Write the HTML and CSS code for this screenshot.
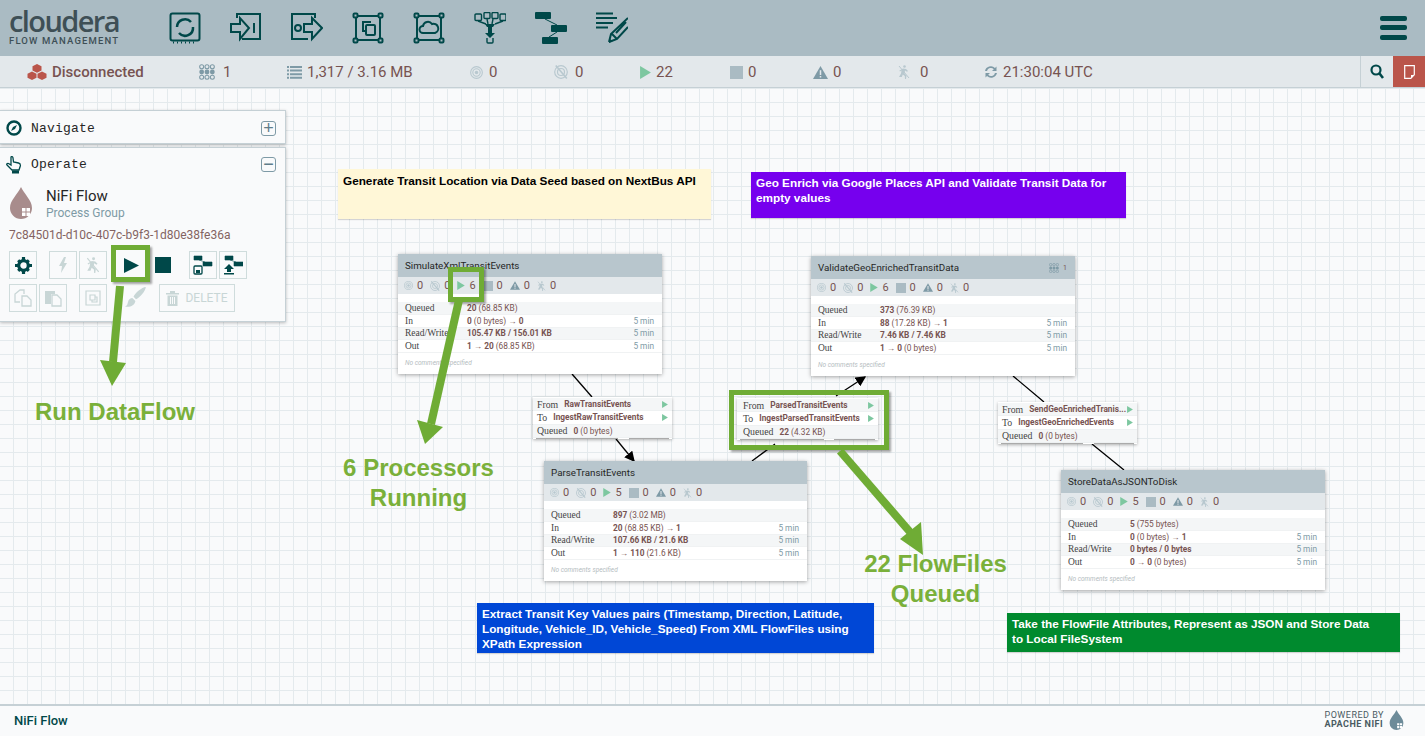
FILE: index.html
```html
<!DOCTYPE html>
<html lang="en">
<head>
    <meta charset="UTF-8">
    <meta name="viewport" content="width=device-width, initial-scale=1.0">
    <title>NiFi Flow</title>
    <link rel="stylesheet" href="styles.css">
</head>
<body>
    <svg class="defs" width="0" height="0">
        <symbol id="i-play" viewBox="0 0 10 12"><path d="M0 0L10 6L0 12z"/></symbol>
        <symbol id="i-target" viewBox="0 0 12 12"><circle cx="6" cy="6" r="5.4" fill="none" stroke="currentColor"/><circle cx="6" cy="6" r="3.4" fill="none" stroke="currentColor"/><circle cx="6" cy="6" r="1.6" fill="currentColor"/></symbol>
        <symbol id="i-off" viewBox="0 0 12 12"><circle cx="6" cy="6" r="5.4" fill="none" stroke="currentColor"/><circle cx="6" cy="6" r="3" fill="none" stroke="currentColor"/><path d="M1.5 0.5L11 11.5" stroke="currentColor" stroke-width="1.4"/></symbol>
        <symbol id="i-warn" viewBox="0 0 14 12"><path d="M7 0L14 12H0z"/><path d="M6.3 4h1.4v4.4H6.3zM6.3 9.2h1.4v1.4H6.3z" fill="#e3e8eb"/></symbol>
        <symbol id="i-bolt" viewBox="0 0 12 14"><circle cx="6.500" cy="1.500" r="1.300"/><path d="M5 3.500l3 .5 2 2-1 .8-2-1.300-.5 3 2 2-.5 3.500H7l-.2-3-2-1.500-1 2.500H1l2-3.500.5-3-1.500 1-.8-.8z"/><path d="M1 1L11 13" stroke="currentColor" stroke-width="1"/></symbol>
        <symbol id="i-grid" viewBox="0 0 12 12"><g fill="none" stroke="currentColor" stroke-width=".8"><circle cx="2" cy="2" r="1.500"/><circle cx="6" cy="2" r="1.500"/><circle cx="10" cy="2" r="1.500"/><circle cx="2" cy="10" r="1.500"/><circle cx="6" cy="10" r="1.500"/><circle cx="10" cy="10" r="1.500"/></g><circle cx="2" cy="6" r="1.800"/><circle cx="6" cy="6" r="1.800"/><circle cx="10" cy="6" r="1.800"/></symbol>
        <symbol id="i-drop" viewBox="0 0 24 32"><path d="M12 0C9 7 1 13 1 21a11 11 0 0 0 22 0C23 13 15 7 12 0z"/><path d="M13 21h3.500v3.500H13zM17.500 21H21v3.500h-3.500zM13 25.500h3.500V29H13zM17.500 25.500H21V29h-3.500z" fill="#fff"/></symbol>
    </svg>

    <div class="navbar">
        <div class="brand">
            <div class="brand-name">cloudera</div>
            <div class="brand-sub">FLOW MANAGEMENT</div>
        </div>
        <div class="toolbox">
            <svg class="tool" viewBox="0 0 32 32"><rect x="1.500" y="1.500" width="29" height="27" rx="2"/><path d="M8 15a8 8 0 0 1 14-5M24 15a8 8 0 0 1-14 6" stroke-width="2.500"/><path d="M4 30.500h1M8 30.500h1M12 30.500h1M16 30.500h1M20 30.500h1M24 30.500h1"/></svg>
            <svg class="tool" viewBox="0 0 32 32"><path d="M7 6V2h23v25H12"/><path d="M1 12h9V6l9 10-9 11v-7H1z"/><path d="M24 11v10"/></svg>
            <svg class="tool" viewBox="0 0 32 32"><path d="M24 6V2H1v25h16"/><circle cx="7" cy="16" r="3"/><path d="M13 12h8V6l10 10-10 11v-7h-8z"/></svg>
            <svg class="tool" viewBox="0 0 32 32"><rect x="4" y="4" width="24" height="24"/><rect x="1.500" y="1.500" width="4" height="4" rx="1" class="nob"/><rect x="26.500" y="1.500" width="4" height="4" rx="1" class="nob"/><rect x="1.500" y="26.500" width="4" height="4" rx="1" class="nob"/><rect x="26.500" y="26.500" width="4" height="4" rx="1" class="nob"/><path d="M18 11v-1h-7v9h3"/><rect x="14" y="13" width="9" height="10" rx="1"/></svg>
            <svg class="tool" viewBox="0 0 32 32"><rect x="4" y="4" width="24" height="24"/><rect x="1.500" y="1.500" width="4" height="4" rx="1" class="nob"/><rect x="26.500" y="1.500" width="4" height="4" rx="1" class="nob"/><rect x="1.500" y="26.500" width="4" height="4" rx="1" class="nob"/><rect x="26.500" y="26.500" width="4" height="4" rx="1" class="nob"/><path d="M10 21a3.500 3.500 0 0 1 0-7 5 5 0 0 1 9-2 4.500 4.500 0 0 1 3 9z"/></svg>
            <svg class="tool thin-tool" viewBox="0 0 32 32"><rect x="1" y="2" width="6.500" height="6.500" rx="1"/><rect x="10" y=".5" width="6" height="6" rx="1"/><rect x="18" y=".5" width="6" height="6" rx="1"/><rect x="26" y="2" width="6" height="6.500" rx="1"/><path d="M4 9l8 3M13 7l1 5M19 7l-1 5M29 9l-8 3"/><path d="M11 12h10l-2 3h-6zM14 15h4v6h3l-5 5-5-5h3z" class="fill"/><path d="M13 26v4a1 1 0 0 0 1 1h4a1 1 0 0 0 1-1v-4"/></svg>
            <svg class="tool fill-all" viewBox="0 0 32 32"><rect x="0" y="0" width="16" height="7" rx="1"/><rect x="16" y="13" width="16" height="7" rx="1"/><rect x="7" y="25" width="16" height="7" rx="1"/><path d="M10 7l12 6M22 20l-8 5" class="thin"/></svg>
            <svg class="tool" viewBox="0 0 32 32"><path d="M0 1.500h17M0 6h21M0 11h17M0 15.500h12" stroke-width="2.200"/><path d="M13 30l2-8L32 6M13 30l8-3L32 15M16 22l5 5M20 21l10-11"/><path d="M13 31l.8-4 3 2z" class="fill"/></svg>
        </div>
        <div class="burger"><span></span><span></span><span></span></div>
    </div>

    <div class="statusbar">
        <div class="stats">
            <span class="stat stat-conn">
                <svg class="cube" width="20" height="16" viewBox="0 0 20 16"><path d="M10 0l4.500 2.200v4.400L10 8.800 5.500 6.600V2.200zM5 7.500l4.500 2.200v4.100L5 16 .5 13.800V9.700zM15 7.500l4.500 2.200v4.100L15 16l-4.500-2.200V9.700z"/></svg>
                Disconnected
            </span>
            <span class="stat stat-threads"><svg class="ic" width="16" height="16"><use href="#i-grid"/></svg>1</span>
            <span class="stat stat-queue">
                <svg class="ic" width="15" height="13" viewBox="0 0 15 13"><path d="M0 0h2v2H0zM3 0h12v2H3zM0 3.600h2v2H0zM3 3.600h12v2H3zM0 7.200h2v2H0zM3 7.200h12v2H3zM0 10.800h2v2H0zM3 10.800h12v2H3z"/></svg>1,317 / 3.16 MB
            </span>
            <span class="stat stat-a"><svg class="ic light" width="13" height="13"><use href="#i-target"/></svg>0</span>
            <span class="stat stat-b"><svg class="ic light" width="14" height="14"><use href="#i-off"/></svg>0</span>
            <span class="stat stat-c"><svg class="ic run" width="11" height="13"><use href="#i-play"/></svg>22</span>
            <span class="stat stat-d"><span class="square"></span>0</span>
            <span class="stat stat-e"><svg class="ic" width="15" height="13"><use href="#i-warn"/></svg>0</span>
            <span class="stat stat-f"><svg class="ic light" width="12" height="14"><use href="#i-bolt"/></svg>0</span>
            <span class="stat stat-g">
                <svg class="ic" width="14" height="14" viewBox="0 0 14 14"><path d="M1 6a6 6 0 0 1 10-3l1.500-1.500V6H8l1.800-1.800A4 4 0 0 0 3 6zM13 8a6 6 0 0 1-10 3l-1.500 1.500V8H6L4.200 9.800A4 4 0 0 0 11 8z"/></svg>21:30:04 UTC
            </span>
        </div>
        <div class="search-btn">
            <svg width="14" height="15" viewBox="0 0 14 15"><circle cx="6" cy="6" r="4.500" fill="none" stroke="#004849" stroke-width="2.200"/><path d="M9.500 9.500L13 14" stroke="#004849" stroke-width="2.600"/></svg>
        </div>
        <div class="bulletin-btn">
            <svg width="11" height="14" viewBox="0 0 11 14"><path d="M.7.700h9.600v9l-3.500 3.600H.7z" fill="none" stroke="#fff" stroke-width="1.200"/><path d="M7 13v-3h3z" fill="#fff"/></svg>
        </div>
    </div>

    <div class="canvas">
        <div class="palette palette-nav">
            <svg width="16" height="16" viewBox="0 0 16 16"><circle cx="8" cy="8" r="6.500" fill="none" stroke="#004849" stroke-width="2.400"/><path d="M11 5L9 9 5 11l2-4z" fill="#004849"/></svg>
            <span class="palette-title">Navigate</span>
            <span class="toggle">+</span>
        </div>
        <div class="palette palette-op">
            <div class="op-head">
                <svg width="16" height="18" viewBox="0 0 16 18"><path d="M5 1c1-1 2 0 2 1l.5 4 5 1c2 .5 2 2 1.800 3L13 14H6L1 9c-1-1 .500-2 1.500-1.500L5 9z" fill="none" stroke="#004849" stroke-width="1.300"/><rect x="6" y="14.500" width="7" height="3" fill="#004849"/></svg>
                <span class="palette-title">Operate</span>
                <span class="toggle">&#8722;</span>
            </div>
            <div class="op-info">
                <svg class="op-drop" width="24" height="32"><use href="#i-drop"/></svg>
                <div>
                    <div class="op-name">NiFi Flow</div>
                    <div class="op-type">Process Group</div>
                </div>
            </div>
            <div class="op-id">7c84501d-d10c-407c-b9f3-1d80e38fe36a</div>
            <div class="op-row">
                <span class="op-btn on mr-gear"><svg width="17" height="17" viewBox="0 0 16 16"><circle cx="8" cy="8" r="4.500" fill="none" stroke="#004849" stroke-width="3"/><path d="M6.500 0h3v3h-3zM6.500 13h3v3h-3zM0 6.500h3v3H0zM13 6.500h3v3h-3zM2 4l2-2 2 2-2 2zM10 4l2-2 2 2-2 2zM2 12l2-2 2 2-2 2zM10 12l2-2 2 2-2 2z" fill="#004849"/></svg></span>
                <span class="op-btn off"><svg width="12" height="16" viewBox="0 0 12 16"><path d="M7 0L2 9h3l-1 7 6-10H7l2-6z" fill="#c8d6d6"/></svg></span>
                <span class="op-btn off mr-bolt"><svg width="14" height="16"><use href="#i-bolt"/></svg></span>
                <span class="op-btn on bare mr-play"><svg width="15" height="15" viewBox="0 0 10 12" preserveAspectRatio="none"><path d="M0 0L10 6L0 12z" fill="#004849"/></svg></span>
                <span class="op-btn on bare mr-stop"><span class="stop"></span></span>
                <span class="op-btn on"><svg width="20" height="20" viewBox="0 0 20 20"><path d="M1 1h8v4H1zM10 7h9v4h-9zM6 5l6 2" fill="#004849" stroke="#004849" stroke-width=".6"/><rect x="1" y="11" width="8" height="8" rx="1" fill="none" stroke="#004849" stroke-width="1.300"/><rect x="3" y="15" width="4" height="3" fill="#004849"/></svg></span>
                <span class="op-btn on"><svg width="20" height="20" viewBox="0 0 20 20"><path d="M2 1h8v4H2zM11 7h9v4h-9zM7 5l6 2" fill="#004849" stroke="#004849" stroke-width=".6"/><path d="M6 9l5 5H8v3H4v-3H1zM1 18h10v1.500H1z" fill="#004849"/></svg></span>
            </div>
            <div class="op-row">
                <span class="op-btn off"><svg width="18" height="18" viewBox="0 0 18 18"><path d="M6 13H1V5l5-4h4v4M8 17V7h5l4 4v6z" fill="none" stroke="#c8d6d6" stroke-width="1.300"/></svg></span>
                <span class="op-btn off mr-paste"><svg width="18" height="18" viewBox="0 0 18 18"><path d="M1 2h10v3H7v10H1z" fill="#c8d6d6"/><path d="M8 6h5l4 4v7H8z" fill="none" stroke="#c8d6d6" stroke-width="1.300"/></svg></span>
                <span class="op-btn off mr-group"><svg width="18" height="18" viewBox="0 0 18 18"><path d="M2 2h14v14H2zM6 6h5v5H6zM8 11v2h5V8h-2" fill="none" stroke="#c8d6d6" stroke-width="1.200"/></svg></span>
                <span class="op-btn brush mr-brush"><svg width="22" height="22" viewBox="0 0 18 18"><path d="M17 0c0 3-5 9-8 10L7 8c1-3 7-8 10-8zM6 9l2.500 2.500C8 15 4 17 0 16c2-1 2-2 2.500-4S4.500 9 6 9z" fill="#c8d6d6"/></svg></span>
                <span class="op-btn off delete"><svg width="13" height="15" viewBox="0 0 13 15"><path d="M0 2h13v1.500H0zM4 0h5v2H4zM1.500 4.500h10V15h-10zM4 6v7h1V6zM6 6v7h1V6zM8 6v7h1V6z" fill="#c8d6d6" fill-rule="evenodd"/></svg>DELETE</span>
            </div>
        </div>

        <!-- sticky labels -->
        <div class="label label-yellow">Generate Transit Location via Data Seed based on NextBus API</div>
        <div class="label label-purple">Geo Enrich via Google Places API and Validate Transit Data for empty values</div>
        <div class="label label-blue">Extract Transit Key Values pairs (Timestamp, Direction, Latitude, Longitude, Vehicle_ID, Vehicle_Speed) From XML FlowFiles using XPath Expression</div>
        <div class="label label-green">Take the FlowFile Attributes, Represent as JSON and Store Data to Local FileSystem</div>

        <svg class="lines" width="1425" height="736" viewBox="0 0 1425 736">
            <defs>
                <marker id="tip" markerWidth="8" markerHeight="8" refX="7" refY="4" orient="auto"><path d="M0 0L8 4L0 8z"/></marker>
            </defs>
            <path d="M572 374L592 397"/>
            <path d="M616 439L634 461" marker-end="url(#tip)"/>
            <path d="M752 461L775 444M836 396L865 377" marker-end="url(#tip)"/>
            <path d="M1013 376L1044 402M1092 444L1124 470"/>
        </svg>

        <div class="proc proc-1">
            <div class="proc-title">SimulateXmlTransitEvents</div>
            <div class="proc-stats">
                <svg class="ic light" width="9" height="9"><use href="#i-target"/></svg><b>0</b>
                <svg class="ic light" width="10" height="10"><use href="#i-off"/></svg><b>0</b>
                <svg class="ic run" width="8" height="9"><use href="#i-play"/></svg><b>6</b>
                <span class="square small"></span><b>0</b>
                <svg class="ic" width="10" height="9"><use href="#i-warn"/></svg><b>0</b>
                <svg class="ic light" width="9" height="10"><use href="#i-bolt"/></svg><b>0</b>
            </div>
            <div class="proc-row shade"><span class="k">Queued</span><span class="v"><b>20</b> (68.85 KB)</span></div>
            <div class="proc-row"><span class="k">In</span><span class="v"><b>0</b> (0 bytes) &#8594; <b>0</b></span><span class="t">5 min</span></div>
            <div class="proc-row shade"><span class="k">Read/Write</span><span class="v"><b>105.47 KB / 156.01 KB</b></span><span class="t">5 min</span></div>
            <div class="proc-row"><span class="k">Out</span><span class="v"><b>1 &#8594; 20</b> (68.85 KB)</span><span class="t">5 min</span></div>
            <div class="proc-comment">No comments specified</div>
        </div>

        <div class="proc proc-2">
            <div class="proc-title">ParseTransitEvents</div>
            <div class="proc-stats">
                <svg class="ic light" width="9" height="9"><use href="#i-target"/></svg><b>0</b>
                <svg class="ic light" width="10" height="10"><use href="#i-off"/></svg><b>0</b>
                <svg class="ic run" width="8" height="9"><use href="#i-play"/></svg><b>5</b>
                <span class="square small"></span><b>0</b>
                <svg class="ic" width="10" height="9"><use href="#i-warn"/></svg><b>0</b>
                <svg class="ic light" width="9" height="10"><use href="#i-bolt"/></svg><b>0</b>
            </div>
            <div class="proc-row shade"><span class="k">Queued</span><span class="v"><b>897</b> (3.02 MB)</span></div>
            <div class="proc-row"><span class="k">In</span><span class="v"><b>20</b> (68.85 KB) &#8594; <b>1</b></span><span class="t">5 min</span></div>
            <div class="proc-row shade"><span class="k">Read/Write</span><span class="v"><b>107.66 KB / 21.6 KB</b></span><span class="t">5 min</span></div>
            <div class="proc-row"><span class="k">Out</span><span class="v"><b>1 &#8594; 110</b> (21.6 KB)</span><span class="t">5 min</span></div>
            <div class="proc-comment">No comments specified</div>
        </div>

        <div class="proc proc-3">
            <div class="proc-title">ValidateGeoEnrichedTransitData<span class="tasks"><svg class="ic" width="10" height="10"><use href="#i-grid"/></svg>1</span></div>
            <div class="proc-stats">
                <svg class="ic light" width="9" height="9"><use href="#i-target"/></svg><b>0</b>
                <svg class="ic light" width="10" height="10"><use href="#i-off"/></svg><b>0</b>
                <svg class="ic run" width="8" height="9"><use href="#i-play"/></svg><b>6</b>
                <span class="square small"></span><b>0</b>
                <svg class="ic" width="10" height="9"><use href="#i-warn"/></svg><b>0</b>
                <svg class="ic light" width="9" height="10"><use href="#i-bolt"/></svg><b>0</b>
            </div>
            <div class="proc-row shade"><span class="k">Queued</span><span class="v"><b>373</b> (76.39 KB)</span></div>
            <div class="proc-row"><span class="k">In</span><span class="v"><b>88</b> (17.28 KB) &#8594; <b>1</b></span><span class="t">5 min</span></div>
            <div class="proc-row shade"><span class="k">Read/Write</span><span class="v"><b>7.46 KB / 7.46 KB</b></span><span class="t">5 min</span></div>
            <div class="proc-row"><span class="k">Out</span><span class="v"><b>1 &#8594; 0</b> (0 bytes)</span><span class="t">5 min</span></div>
            <div class="proc-comment">No comments specified</div>
        </div>

        <div class="proc proc-4">
            <div class="proc-title">StoreDataAsJSONToDisk</div>
            <div class="proc-stats">
                <svg class="ic light" width="9" height="9"><use href="#i-target"/></svg><b>0</b>
                <svg class="ic light" width="10" height="10"><use href="#i-off"/></svg><b>0</b>
                <svg class="ic run" width="8" height="9"><use href="#i-play"/></svg><b>5</b>
                <span class="square small"></span><b>0</b>
                <svg class="ic" width="10" height="9"><use href="#i-warn"/></svg><b>0</b>
                <svg class="ic light" width="9" height="10"><use href="#i-bolt"/></svg><b>0</b>
            </div>
            <div class="proc-row shade"><span class="k">Queued</span><span class="v"><b>5</b> (755 bytes)</span></div>
            <div class="proc-row"><span class="k">In</span><span class="v"><b>0</b> (0 bytes) &#8594; <b>1</b></span><span class="t">5 min</span></div>
            <div class="proc-row shade"><span class="k">Read/Write</span><span class="v"><b>0 bytes / 0 bytes</b></span><span class="t">5 min</span></div>
            <div class="proc-row"><span class="k">Out</span><span class="v"><b>0 &#8594; 0</b> (0 bytes)</span><span class="t">5 min</span></div>
            <div class="proc-comment">No comments specified</div>
        </div>

        <div class="conn conn-1">
            <div class="conn-row shade"><span class="ck">From</span><b>RawTransitEvents</b><svg class="ic run" width="6" height="7"><use href="#i-play"/></svg></div>
            <div class="conn-row"><span class="ck">To</span><b>IngestRawTransitEvents</b><svg class="ic run" width="6" height="7"><use href="#i-play"/></svg></div>
            <div class="conn-row shade"><span class="ck">Queued</span><span class="cv"><b>0</b> (0 bytes)</span></div>
            <div class="conn-bar"></div>
        </div>
        <div class="conn conn-2">
            <div class="conn-row shade"><span class="ck">From</span><b>ParsedTransitEvents</b><svg class="ic run" width="6" height="7"><use href="#i-play"/></svg></div>
            <div class="conn-row"><span class="ck">To</span><b>IngestParsedTransitEvents</b><svg class="ic run" width="6" height="7"><use href="#i-play"/></svg></div>
            <div class="conn-row shade"><span class="ck">Queued</span><span class="cv"><b>22</b> (4.32 KB)</span></div>
            <div class="conn-bar"></div>
        </div>
        <div class="conn conn-3">
            <div class="conn-row shade"><span class="ck">From</span><b>SendGeoEnrichedTranis...</b><svg class="ic run" width="6" height="7"><use href="#i-play"/></svg></div>
            <div class="conn-row"><span class="ck">To</span><b>IngestGeoEnrichedEvents</b><svg class="ic run" width="6" height="7"><use href="#i-play"/></svg></div>
            <div class="conn-row shade"><span class="ck">Queued</span><span class="cv"><b>0</b> (0 bytes)</span></div>
            <div class="conn-bar"></div>
        </div>

        <!-- green callouts drawn on top of the flow -->
        <div class="box box-play"></div>
        <div class="box box-six"></div>
        <div class="box box-conn"></div>
        <svg class="arrows" width="1425" height="736" viewBox="0 0 1425 736">
            <path d="M120 286L113 362"/>
            <path d="M100 360L126 363L112 386z" class="head"/>
            <path d="M459 300L431 424"/>
            <path d="M417 420L443 427L425 444z" class="head"/>
            <path d="M840 451L910 532"/>
            <path d="M900 539L921 522L923 555z" class="head"/>
        </svg>
        <div class="note note-run">Run DataFlow</div>
        <div class="note note-six">6 Processors<br>Running</div>
        <div class="note note-flow">22 FlowFiles<br>Queued</div>
    </div>

    <div class="footer">
        <span class="crumb">NiFi Flow</span>
        <div class="powered">
            <div>POWERED BY<br><b>APACHE NIFI</b></div>
            <svg width="15" height="20"><use href="#i-drop"/></svg>
        </div>
    </div>
</body>
</html>
```

FILE: styles.css
```css
html, body {
    margin: 0;
    height: 100%;
}

body {
    width: 1425px;
    height: 736px;
    overflow: hidden;
    font-family: Roboto, "Liberation Sans", sans-serif;
    display: flex;
    flex-direction: column;
    background: #f9fafb;
    color: #775351;
}

.defs {
    position: absolute;
}

.navbar {
    height: 56px;
    flex: none;
    background: #aabbc3;
    display: flex;
    align-items: center;
    box-sizing: border-box;
    padding-left: 9px;
    color: #004849;
}

.brand {
    width: 160px;
    margin-top: -2px;
    color: #3e4f56;
}

.brand-name {
    font-family: "Open Sans", sans-serif;
    font-size: 29px;
    font-weight: 600;
    letter-spacing: -1.6px;
    line-height: 25px;
}

.brand-sub {
    font-size: 9.5px;
    letter-spacing: 1.15px;
    line-height: 10px;
    margin-top: 3px;
    font-weight: 500;
}

.toolbox {
    display: flex;
    gap: 29px;
}

.tool {
    width: 32px;
    height: 32px;
    fill: none;
    stroke: #004849;
    stroke-width: 2;
}

.tool .fill {
    fill: #004849;
    stroke: none;
}

.tool .nob {
    fill: #aabbc3;
}

.thin-tool {
    stroke-width: 1.4;
}

.fill-all {
    fill: #004849;
    stroke: none;
}

.fill-all .thin {
    stroke: #004849;
    stroke-width: 1;
}

.burger {
    margin-left: auto;
    margin-right: 18px;
    margin-top: -1px;
    width: 27px;
    display: flex;
    flex-direction: column;
    gap: 4.5px;
}

.burger span {
    height: 5px;
    border-radius: 2px;
    background: #004849;
}

.statusbar {
    height: 32px;
    flex: none;
    background: #e3e8eb;
    border-bottom: 1px solid #c5d0d5;
    box-sizing: border-box;
    display: flex;
    align-items: stretch;
}

.stats {
    flex: 1;
    display: flex;
    align-items: center;
    padding-top: 1px;
    font-size: 15px;
    color: #775351;
}

.stat {
    display: flex;
    align-items: center;
    white-space: nowrap;
}

.stat-conn { margin-left: 27px; width: 172px; font-weight: 500; gap: 5px; }
.stat-threads { width: 88px; gap: 8px; }
.stat-queue { width: 183px; gap: 5px; }
.stat-a { width: 84px; gap: 6px; }
.stat-b { width: 86px; gap: 7px; }
.stat-c { width: 90px; gap: 5px; }
.stat-d { width: 83px; gap: 5px; }
.stat-e { width: 85px; gap: 5px; }
.stat-f { width: 86px; gap: 10px; }
.stat-g { gap: 5px; }

.ic {
    fill: #7e9aa6;
    color: #7e9aa6;
    flex: none;
}

.ic.light {
    fill: #b8c8cf;
    color: #b8c8cf;
}

.ic.run {
    fill: #7dc7a0;
    color: #7dc7a0;
}

.cube {
    fill: #ba554a;
}

.square {
    width: 13px;
    height: 13px;
    background: #aabbc3;
    display: inline-block;
}

.search-btn {
    width: 32px;
    border-left: 1px solid #c5d0d5;
    display: flex;
    align-items: center;
    justify-content: center;
}

.bulletin-btn {
    width: 32px;
    background: #ba554a;
    display: flex;
    align-items: center;
    justify-content: center;
}

.canvas {
    position: relative;
    height: 616px;
    flex: none;
    background-color: #f9fafb;
    background-image:
        linear-gradient(to right, #e4eaed 1px, transparent 1px),
        linear-gradient(to bottom, #e4eaed 1px, transparent 1px);
    background-size: 14px 14px;
    background-position: 13px 0;
}

.palette {
    position: absolute;
    left: 0;
    width: 286px;
    background: #f9fafb;
    border: 1px solid #c5d0d5;
    border-left: none;
    box-shadow: 0 1px 3px rgba(0, 0, 0, 0.25);
    box-sizing: border-box;
    padding: 0 9px 0 6px;
}

.palette-nav {
    top: 22px;
    height: 34px;
    display: flex;
    align-items: center;
    padding-top: 2px;
}

.palette-op {
    top: 59px;
    height: 175px;
}

.op-head {
    height: 33px;
    display: flex;
    align-items: center;
}

.palette-title {
    font-family: "Liberation Mono", monospace;
    font-size: 13px;
    letter-spacing: 0.2px;
    color: #262626;
    margin-left: 9px;
}

.toggle {
    margin-left: auto;
    width: 13px;
    height: 13px;
    border: 1px solid #7e9aa6;
    border-radius: 3px;
    color: #5f7d8a;
    font-size: 18px;
    line-height: 12px;
    text-align: center;
    font-family: "Liberation Sans", sans-serif;
}

.op-info {
    display: flex;
    align-items: flex-start;
    gap: 13px;
    padding-left: 3px;
    margin-top: 6px;
}

.op-drop {
    fill: #a88c8c;
}

.op-name {
    font-size: 15px;
    line-height: 17px;
    color: #262626;
    margin-top: 1px;
}

.op-type {
    font-size: 12px;
    line-height: 16px;
    color: #7e9aa6;
}

.op-id {
    font-size: 12px;
    margin: 7px 0 0 3px;
    line-height: 14px;
    color: #775351;
    opacity: 0.9;
}

.op-row {
    display: flex;
    gap: 2px;
    margin: 9px 0 0 3px;
}

.op-row + .op-row {
    margin-top: 5px;
}

.op-btn {
    width: 28px;
    height: 28px;
    border: 1px solid #cfdcdc;
    box-sizing: border-box;
    display: flex;
    align-items: center;
    justify-content: center;
    flex: none;
    color: #c8d6d6;
    fill: #c8d6d6;
}

.op-btn.bare, .op-btn.brush {
    border-color: transparent;
}

.mr-gear { margin-right: 10px; }
.mr-bolt { margin-right: 8px; }
.mr-play { margin-right: 2px; }
.mr-stop { margin-right: 10px; }
.mr-paste { margin-right: 10px; }
.mr-group { margin-right: 13px; }
.mr-brush { margin-right: 7px; }

.stop {
    width: 16px;
    height: 16px;
    background: #004849;
}

.delete {
    width: 76px;
    gap: 6px;
    font-size: 12px;
}

/* sticky labels */
.label {
    position: absolute;
    box-sizing: border-box;
    font-family: "Liberation Sans", sans-serif;
    font-weight: bold;
    font-size: 11.75px;
    line-height: 15px;
    padding: 3px 5px;
    color: #fff;
    box-shadow: 0 1px 1px rgba(0, 0, 0, 0.15);
}

.label-yellow {
    left: 338px;
    top: 81px;
    width: 373px;
    height: 50px;
    padding-top: 4px;
    background: #fff7d7;
    color: #000;
}

.label-purple {
    left: 751px;
    top: 84px;
    width: 375px;
    height: 46px;
    background: #7600ee;
}

.label-blue {
    left: 477px;
    top: 515px;
    width: 397px;
    height: 50px;
    background: #0047d6;
}

.label-green {
    left: 1007px;
    top: 525px;
    width: 393px;
    height: 39px;
    padding-right: 24px;
    background: #008a2e;
}

.lines {
    position: absolute;
    left: 0;
    top: -88px;
}

.lines path {
    fill: none;
    stroke: #000;
    stroke-width: 1.3;
}

.lines marker path {
    fill: #000;
    stroke: none;
}

/* processors */
.proc {
    position: absolute;
    width: 264px;
    height: 120px;
    background: #fff;
    box-shadow: 0 1px 4px rgba(0, 0, 0, 0.35);
    font-size: 9px;
    color: #262626;
}

.proc-1 { left: 398px; top: 166px; }
.proc-2 { left: 544px; top: 373px; width: 263px; }
.proc-3 { left: 811px; top: 168px; }
.proc-4 { left: 1061px; top: 382px; }

.proc-title {
    height: 23px;
    background: #b8c6cd;
    display: flex;
    align-items: center;
    justify-content: space-between;
    padding: 0 8px 0 7px;
    font-size: 9.8px;
    color: #262626;
}

.tasks {
    display: flex;
    align-items: center;
    gap: 4px;
    font-size: 7px;
    color: #775351;
}

.proc-stats {
    height: 17px;
    background: #e3e8eb;
    display: flex;
    align-items: center;
    padding-left: 6px;
    margin-bottom: 8px;
}

.proc-stats b {
    font-weight: 400;
    font-size: 11px;
    color: #775351;
    margin: 0 7px 0 4px;
}

.square.small {
    width: 10px;
    height: 10px;
}

.proc-row {
    height: 12.8px;
    display: flex;
    align-items: center;
    padding: 0 8px 0 7px;
    border-bottom: 1px solid #f0f2f3;
    box-sizing: border-box;
    font-family: "Liberation Serif", serif;
}

.proc-row.shade {
    background: #f4f6f7;
}

.k {
    width: 62px;
    font-size: 9.5px;
    color: #444;
}

.v {
    font-family: Roboto, sans-serif;
    font-size: 8.3px;
    color: #775351;
}

.t {
    margin-left: auto;
    font-family: Roboto, sans-serif;
    font-size: 8.3px;
    color: #7e9aa6;
}

.proc-comment {
    padding: 6px 0 0 7px;
    font-size: 6.5px;
    font-style: italic;
    color: #b4bcc0;
}

/* connections */
.conn {
    position: absolute;
    width: 139px;
    height: 42px;
    padding-top: 1px;
    background: #fff;
    box-shadow: 0 1px 3px rgba(0, 0, 0, 0.3);
    font-size: 8.3px;
    box-sizing: border-box;
}

.conn-1 { left: 533px; top: 309px; }
.conn-2 { left: 737px; top: 310px; width: 141px; }
.conn-3 { left: 998px; top: 314px; }

.conn-row {
    height: 13.3px;
    display: flex;
    align-items: center;
    padding: 0 2px 0 4px;
    border-bottom: 1px solid #eef1f2;
    box-sizing: border-box;
    white-space: nowrap;
    color: #775351;
}

.conn-2 .conn-row {
    padding-left: 6px;
}

.conn-row.shade {
    background: #f4f6f7;
}

.conn-row svg {
    margin-left: auto;
    margin-right: 2px;
}

.ck {
    font-family: "Liberation Serif", serif;
    font-size: 9.8px;
    color: #444;
    margin-right: 6px;
}

.conn-bar {
    height: 1px;
    margin: 0 3px;
    background: linear-gradient(to right, #aaa 62%, transparent 62%, transparent 70%, #aaa 70%);
}

/* callouts */
.box {
    position: absolute;
    box-sizing: border-box;
    border: 5px solid #6fac35;
    box-shadow: 2px 2px 2px rgba(0, 0, 0, 0.35);
}

.box-play { left: 111px; top: 157px; width: 39px; height: 37px; }
.box-six { left: 448px; top: 179px; width: 36px; height: 35px; }
.box-conn { left: 729px; top: 302px; width: 160px; height: 60px; }

.arrows {
    position: absolute;
    left: 0;
    top: -88px;
}

.arrows path {
    fill: none;
    stroke: #6fac35;
    stroke-width: 8;
}

.arrows .head {
    fill: #6fac35;
    stroke: none;
}

.note {
    position: absolute;
    font-family: "Liberation Sans", sans-serif;
    font-weight: bold;
    font-size: 24px;
    line-height: 30px;
    color: #7ab03a;
    text-align: center;
    white-space: nowrap;
}

.note-run { left: 35px; top: 309px; }
.note-six { left: 343px; top: 365px; width: 151px; }
.note-flow { left: 864px; top: 461px; width: 143px; }

.footer {
    flex: 1;
    border-top: 2px solid #c5d0d5;
    box-sizing: border-box;
    background: #f9fafb;
    display: flex;
    align-items: center;
    justify-content: space-between;
    padding: 0 21px 2px 14px;
}

.crumb {
    font-size: 13px;
    font-weight: 500;
    color: #004849;
}

.powered {
    display: flex;
    align-items: center;
    gap: 5px;
    font-size: 9px;
    line-height: 9px;
    letter-spacing: 0.5px;
    color: #4a5b62;
}

.powered svg {
    fill: #6d8b99;
}
```
